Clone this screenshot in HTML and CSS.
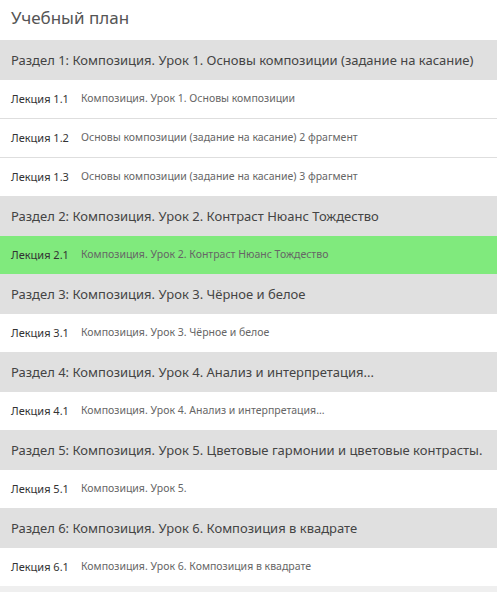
FILE: index.html
```html
<!DOCTYPE html>
<html lang="ru">
<head>
<meta charset="utf-8">
<link rel="stylesheet" href="styles.css">
</head>
<body>
<div class="plan">
  <h1 class="plan-title">Учебный план</h1>

  <div class="section">Раздел 1: Композиция. Урок 1. Основы композиции (задание на касание)</div>
  <div class="lessons">
    <div class="lesson"><span class="lesson-num">Лекция 1.1</span><span class="lesson-name">Композиция. Урок 1. Основы композиции</span></div>
    <div class="lesson"><span class="lesson-num">Лекция 1.2</span><span class="lesson-name">Основы композиции (задание на касание) 2 фрагмент</span></div>
    <div class="lesson"><span class="lesson-num">Лекция 1.3</span><span class="lesson-name">Основы композиции (задание на касание) 3 фрагмент</span></div>
  </div>

  <div class="section">Раздел 2: Композиция. Урок 2. Контраст Нюанс Тождество</div>
  <div class="lessons">
    <div class="lesson active"><span class="lesson-num">Лекция 2.1</span><span class="lesson-name">Композиция. Урок 2. Контраст Нюанс Тождество</span></div>
  </div>

  <div class="section">Раздел 3: Композиция. Урок 3. Чёрное и белое</div>
  <div class="lessons">
    <div class="lesson"><span class="lesson-num">Лекция 3.1</span><span class="lesson-name">Композиция. Урок 3. Чёрное и белое</span></div>
  </div>

  <div class="section">Раздел 4: Композиция. Урок 4. Анализ и интерпретация...</div>
  <div class="lessons">
    <div class="lesson"><span class="lesson-num">Лекция 4.1</span><span class="lesson-name">Композиция. Урок 4. Анализ и интерпретация...</span></div>
  </div>

  <div class="section">Раздел 5: Композиция. Урок 5. Цветовые гармонии и цветовые контрасты.</div>
  <div class="lessons">
    <div class="lesson"><span class="lesson-num">Лекция 5.1</span><span class="lesson-name">Композиция. Урок 5.</span></div>
  </div>

  <div class="section">Раздел 6: Композиция. Урок 6. Композиция в квадрате</div>
  <div class="lessons">
    <div class="lesson"><span class="lesson-num">Лекция 6.1</span><span class="lesson-name">Композиция. Урок 6. Композиция в квадрате</span></div>
  </div>

  <div class="section section-next"></div>
</div>
</body>
</html>
```
FILE: styles.css
```css
html, body {
  margin: 0;
  padding: 0;
  background: #fff;
}
body {
  font-family: "Noto Sans", "Open Sans", sans-serif;
  color: #444;
}
.plan {
  display: flex;
  flex-direction: column;
}
.plan-title {
  margin: 0;
  height: 40px;
  padding: 6px 11px 0;
  box-sizing: border-box;
  font-size: 17px;
  font-weight: 400;
  line-height: 24px;
  color: #555;
}
.section {
  height: 40px;
  display: flex;
  align-items: center;
  padding: 0 11px;
  background: #e0e0e0;
  font-size: 13px;
  color: #444;
  white-space: nowrap;
  overflow: hidden;
}
.section-next {
  background: #efefef;
}
.lessons {
  display: flex;
  flex-direction: column;
}
.lesson {
  height: 38px;
  display: flex;
  align-items: center;
  padding: 0 11px 2px;
  box-sizing: border-box;
  font-size: 11px;
  white-space: nowrap;
}
.lesson + .lesson {
  border-top: 1px solid #dedede;
  height: 39px;
}
.lesson.active {
  background: #80ea7d;
}
.lesson-num {
  width: 70px;
  flex: none;
  color: #333;
}
.lesson-name {
  font-size: 10.5px;
  color: #666;
}
```
